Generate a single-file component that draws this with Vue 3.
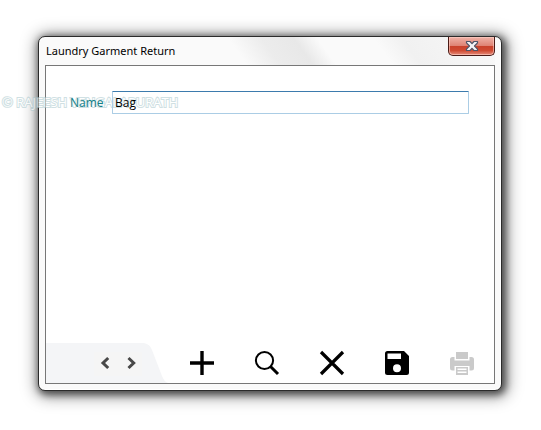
<script setup>
import { ref } from 'vue'

const name = ref('Bag')
</script>

<template>
  <main class="desktop">
    <section class="window" aria-labelledby="window-title">
      <header class="titlebar">
        <h1 id="window-title" class="title">Laundry Garment Return</h1>
        <button class="close" type="button" aria-label="Close">
          <svg width="14" height="12" viewBox="0 0 14 12">
            <path
              d="M1.5 1.5H5L7 3.7L9 1.5H12.5V2.8L9.5 6L12.5 9.2V10.5H9L7 8.3L5 10.5H1.5V9.2L4.5 6L1.5 2.8Z"
              fill="#f4f4f6"
              stroke="#505568"
              stroke-width="1.2"
              stroke-linejoin="round"
            />
          </svg>
        </button>
      </header>

      <div class="client">
        <form class="form" @submit.prevent>
          <label class="label" for="name">Name</label>
          <input id="name" v-model="name" class="field" type="text" autocomplete="off" />
        </form>

        <footer class="toolbar">
          <nav class="pager">
            <svg class="pager-shape" width="123" height="40" viewBox="0 0 123 40">
              <path d="M0 0H96C101 0 104 2 106 7L116 33C118 37 119 39 122 40H0Z" fill="#f4f5f7" />
              <rect x="48" y="9" width="48" height="24" fill="#f5f5f5" />
            </svg>
            <button class="step" type="button" aria-label="Previous">
              <svg width="12" height="14" viewBox="0 0 12 14">
                <path d="M9.2 2L4 7L9.2 12" fill="none" stroke="#484848" stroke-width="3" />
              </svg>
            </button>
            <button class="step" type="button" aria-label="Next">
              <svg width="12" height="14" viewBox="0 0 12 14">
                <path d="M3.5 2L8.7 7L3.5 12" fill="none" stroke="#484848" stroke-width="3" />
              </svg>
            </button>
          </nav>
          <div class="actions">
            <button class="action" type="button" aria-label="Add">
              <svg width="26" height="26" viewBox="0 0 26 26">
                <path d="M13 1V25M1 13H25" stroke="#000" stroke-width="3.4" />
              </svg>
            </button>
            <button class="action" type="button" aria-label="Search">
              <svg width="26" height="26" viewBox="0 0 26 26">
                <circle cx="10.5" cy="10.5" r="8.6" fill="none" stroke="#000" stroke-width="2" />
                <path d="M16.5 16.5L24 24" stroke="#000" stroke-width="3" />
              </svg>
            </button>
            <button class="action" type="button" aria-label="Delete">
              <svg width="26" height="26" viewBox="0 0 26 26">
                <path d="M2 2L24 24M24 2L2 24" stroke="#000" stroke-width="3.2" />
              </svg>
            </button>
            <button class="action" type="button" aria-label="Save">
              <svg width="26" height="26" viewBox="0 0 26 26">
                <path
                  d="M3.5 1H20L25 6V22.5Q25 25 22.5 25H3.5Q1 25 1 22.5V3.5Q1 1 3.5 1ZM3.5 3.5V9H17V3.5ZM13 14.2A4 4 0 1 0 13 22.2A4 4 0 1 0 13 14.2Z"
                  fill="#000"
                  fill-rule="evenodd"
                />
              </svg>
            </button>
            <button class="action" type="button" aria-label="Print" disabled>
              <svg width="26" height="26" viewBox="0 0 26 26">
                <g fill="#cacaca">
                  <rect x="7" y="2" width="12" height="7" />
                  <path
                    d="M3.5 7H5.5V10.5H20.5V7H22.5Q25 7 25 9.5V18Q25 20.5 22.5 20.5H20.5V16H5.5V20.5H3.5Q1 20.5 1 18V9.5Q1 7 3.5 7Z"
                  />
                  <path
                    d="M7 17H19V25H7ZM8.5 18.5V20H17.5V18.5ZM8.5 21.5V23H17.5V21.5Z"
                    fill-rule="evenodd"
                  />
                </g>
              </svg>
            </button>
          </div>
        </footer>
      </div>
    </section>
    <span class="watermark">© RAJEESH VENGALAPURATH</span>
  </main>
</template>

<style>
body {
  background: #fff;
}
</style>

<style scoped>
.desktop {
  position: relative;
  padding: 36px 39px 39px 38px;
  overflow: hidden;
  font-family: 'Open Sans', 'Noto Sans', sans-serif;
  font-size: 12px;
  line-height: 16px;
  color: #000;
}

.window {
  padding: 0 6px 6px;
  border: 1px solid #2b2b2b;
  border-radius: 7px;
  background: #fafafa;
  box-shadow:
    inset 0 0 0 1px #fff,
    2px 2px 7px 2px rgba(0, 0, 0, 0.55),
    2px 2px 16px 4px rgba(0, 0, 0, 0.4);
}

.titlebar {
  display: flex;
  align-items: flex-start;
  justify-content: space-between;
  height: 28px;
  background: linear-gradient(
    54deg,
    #fafafa 43%,
    #ececec 50%,
    #e8e8e8 57%,
    #fafafa 62%,
    #fafafa 74%,
    #f1f1f1 80%,
    #f8f8f8 100%
  );
}

.title {
  margin: 0;
  padding: 6px 1px;
  font-family: 'Noto Sans', 'Open Sans', sans-serif;
  font-size: 11px;
  font-weight: 400;
  line-height: 16px;
}

.close {
  display: flex;
  align-items: center;
  justify-content: center;
  width: 47px;
  height: 19px;
  padding: 0;
  border: 1px solid #4a1a16;
  border-top: 0;
  border-radius: 0 0 5px 5px;
  background: linear-gradient(#f0b3a8 0%, #df8374 48%, #c9412b 50%, #cf4a32 75%, #e58c7b 100%);
  box-shadow: inset 0 0 0 1px rgba(255, 210, 200, 0.6);
}

.client {
  display: flex;
  flex-direction: column;
  min-height: 317px;
  border: 1px solid #777;
  background: #fff;
}

.form {
  display: grid;
  grid-template-columns: 42px 1fr;
  align-items: center;
  flex: 1;
  align-content: start;
  padding: 25px 25px 24px 24px;
}

.label {
  position: relative;
  z-index: 1;
  color: #128088;
}

.field {
  position: relative;
  z-index: 1;
  box-sizing: border-box;
  width: 100%;
  height: 23px;
  padding: 0 2px;
  border: 1px solid #abcde5;
  border-top-color: #3d7bad;
  border-radius: 1px;
  outline: 0;
  background: transparent;
  color: #000;
  font: inherit;
}

.toolbar {
  display: flex;
  height: 40px;
}

.pager {
  position: relative;
  display: flex;
  align-items: center;
  box-sizing: border-box;
  width: 123px;
  padding-left: 46px;
}

.pager-shape {
  position: absolute;
  inset: 0;
}

.step,
.action {
  position: relative;
  display: flex;
  align-items: center;
  justify-content: center;
  padding: 0;
  border: 0;
  background: none;
}

.step {
  width: 26px;
  height: 26px;
}

.actions {
  display: grid;
  grid-template-columns: repeat(5, 1fr);
  flex: 1;
}

.watermark {
  position: absolute;
  top: 94px;
  left: 2px;
  color: #fff;
  font-family: 'Open Sans', 'Noto Sans', sans-serif;
  font-size: 13px;
  white-space: nowrap;
  pointer-events: none;
  opacity: 0.55;
  -webkit-text-stroke: 2px #aac8cd;
  paint-order: stroke fill;
}
</style>
